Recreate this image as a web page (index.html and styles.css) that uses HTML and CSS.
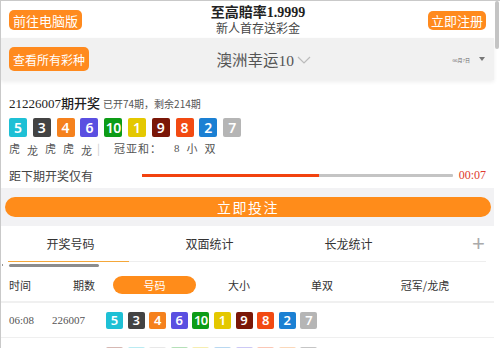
FILE: index.html
```html
<!DOCTYPE html>
<html lang="zh">
<head>
<meta charset="utf-8">
<title>澳洲幸运10</title>
<link rel="stylesheet" href="styles.css">
</head>
<body>
<div class="frame">
  <div class="page">
    <header class="topbar">
      <span class="btn btn-pc">前往电脑版</span>
      <div class="promo">
        <div class="promo-title">至高賠率1.9999</div>
        <div class="promo-sub">新人首存送彩金</div>
      </div>
      <span class="btn btn-reg">立即注册</span>
    </header>
    <div class="subbar">
      <span class="btn btn-all">查看所有彩种</span>
      <div class="game">澳洲幸运10<svg class="chev" width="14" height="8" viewBox="0 0 14 8"><path d="M1 1 L7 7 L13 1" fill="none" stroke="#bbb" stroke-width="1.2"/></svg></div>
      <div class="date">06月7日<span class="tri"></span></div>
    </div>
    <section class="draw">
      <div class="issue"><span class="issue-no">21226007期开奖</span><span class="issue-meta">已开74期，剩余214期</span></div>
      <div class="balls">
        <span class="ball c5">5</span><span class="ball c3">3</span><span class="ball c4">4</span><span class="ball c6">6</span><span class="ball c10">10</span><span class="ball c1">1</span><span class="ball c9">9</span><span class="ball c8">8</span><span class="ball c2">2</span><span class="ball c7">7</span>
      </div>
      <div class="lh">
        <span class="lh-item">虎</span><span class="lh-item low">龙</span><span class="lh-item">虎</span><span class="lh-item">虎</span><span class="lh-item low">龙</span><span class="sep">|</span><span class="sum">冠亚和：</span><span class="num">8</span><span class="lh-item">小</span><span class="lh-item">双</span>
      </div>
      <div class="countdown">
        <span class="cd-label">距下期开奖仅有</span>
        <div class="bar"><div class="bar-fill" style="width:57%"></div></div>
        <span class="cd-time">00:07</span>
      </div>
    </section>
    <div class="bet-wrap"><div class="bet">立即投注</div></div>
    <nav class="tabs">
      <span class="tab">开奖号码</span>
      <span class="tab">双面统计</span>
      <span class="tab">长龙统计</span>
      <span class="plus">+</span>
    </nav>
    <div class="tab-line"><div class="tab-active"></div></div>
    <div class="hscroll"><span class="harrow"></span><div class="hthumb"></div></div>
    <div class="thead">
      <span class="th th-time">时间</span>
      <span class="th th-no">期数</span>
      <span class="th th-pill">号码</span>
      <span class="th th-a">大小</span>
      <span class="th th-b">单双</span>
      <span class="th th-c">冠军/龙虎</span>
    </div>
    <div class="row">
      <span class="td-time">06:08</span>
      <span class="td-no">226007</span>
      <div class="sballs">
        <span class="sball c5">5</span><span class="sball c3">3</span><span class="sball c4">4</span><span class="sball c6">6</span><span class="sball c10">10</span><span class="sball c1">1</span><span class="sball c9">9</span><span class="sball c8">8</span><span class="sball c2">2</span><span class="sball c7">7</span>
      </div>
    </div>
    <div class="row faded">
      <span class="td-time"></span>
      <span class="td-no"></span>
      <div class="sballs">
        <span class="sball c9"></span><span class="sball c5"></span><span class="sball c7"></span><span class="sball c10"></span><span class="sball c1"></span><span class="sball c2"></span><span class="sball c6"></span><span class="sball c8"></span><span class="sball c4"></span><span class="sball c3"></span>
      </div>
    </div>
  </div>
  <div class="vscroll"><div class="vthumb"></div></div>
</div>
</body>
</html>
```

FILE: styles.css
```css
* { box-sizing: border-box; }
html, body { margin: 0; padding: 0; }
body {
  width: 500px;
  height: 348px;
  overflow: hidden;
  background: #fff;
  font-family: "Liberation Serif", "Noto Sans CJK SC", serif;
  color: #333;
}
.frame {
  display: flex;
  height: 348px;
  border-top: 1px solid #c9c9c9;
  border-left: 1px solid #c9c9c9;
  overflow: hidden;
}
.page { flex: 1; min-width: 0; }
.vscroll { width: 6px; position: relative; }
.vthumb {
  margin-left: 1px;
  width: 4px;
  height: 48px;
  background: #c4c4c4;
  border-radius: 2px;
}

.btn {
  display: inline-flex;
  align-items: center;
  justify-content: center;
  background: #ff8a1e;
  color: #fff;
  font-family: "Noto Sans CJK SC", sans-serif;
  border-radius: 5px;
}
.topbar {
  height: 37px;
  display: flex;
  align-items: center;
  justify-content: space-between;
  padding: 0 8px 0 8px;
}
.btn-pc { font-size: 13px; height: 20px; padding: 0 4px; margin-top: 1px; }
.btn-reg { font-size: 13px; height: 19px; padding: 0 3px; margin-top: 2px; }
.promo { text-align: center; padding-left: 6px; }
.promo-title { font-size: 14px; font-weight: bold; line-height: 15px; color: #222; }
.promo-sub { font-size: 12px; line-height: 15px; color: #444; font-family: "Noto Sans CJK SC", sans-serif; }

.subbar {
  height: 42px;
  background: #f1f1f1;
  display: flex;
  align-items: center;
  padding: 0 8px;
  box-shadow: 0 2px 4px rgba(0,0,0,0.07);
  position: relative;
}
.btn-all { font-size: 12px; height: 24px; padding: 0 4px; width: 80px; }
.game {
  flex: 1;
  text-align: center;
  font-size: 15.5px;
  color: #555;
  padding-right: 14px;
  display: flex;
  align-items: center;
  justify-content: center;
  gap: 3px;
}
.chev { margin-top: 2px; }
.date {
  font-size: 5px;
  color: #666;
  display: flex;
  align-items: center;
  gap: 9px;
  padding-right: 1px;
}
.tri {
  width: 0; height: 0;
  border-left: 3.5px solid transparent;
  border-right: 3.5px solid transparent;
  border-top: 4px solid #777;
}

.draw { padding: 15px 8px 5px 8px; }
.issue { display: flex; align-items: baseline; line-height: 18px; }
.issue-no { font-size: 13px; color: #222; font-weight: 500; }
.issue-meta { font-size: 10px; color: #555; margin-left: 3px; font-family: "Noto Sans CJK SC", sans-serif; }
.balls { display: flex; gap: 5.8px; margin-top: 5px; }
.ball, .sball {
  display: inline-flex;
  align-items: center;
  justify-content: center;
  color: #fff;
  font-family: "Noto Sans", "Liberation Sans", sans-serif;
  font-weight: 600;
  border-radius: 2px;
}
.ball { width: 18px; height: 19px; font-size: 14px; }
.c5 { background: #1ec0d5; }
.c3 { background: #434343; }
.c4 { background: #f5811d; }
.c6 { background: #5a4fe1; }
.c10 { background: #0d9c17; letter-spacing: -0.5px; }
.c1 { background: #e4c800; }
.c9 { background: #7a1607; }
.c8 { background: #f24a12; }
.c2 { background: #1b80d3; }
.c7 { background: #b5b5b5; }

.lh {
  display: flex;
  align-items: center;
  margin-top: 4px;
  height: 14px;
  font-size: 11px;
  color: #555;
  font-family: "Noto Sans CJK SC", sans-serif;
}
.lh-item { width: 11px; margin-right: 7px; }
.lh-item.low { position: relative; top: 2px; }
.sep { color: #ccc; margin-right: 14px; margin-left: -2px; }
.sum { margin-right: 12px; letter-spacing: 1px; }
.num { font-family: "Liberation Serif", serif; margin-right: 7px; }

.countdown {
  display: flex;
  align-items: center;
  margin-top: 12px;
  height: 16px;
}
.cd-label { font-size: 12px; color: #444; font-family: "Noto Sans CJK SC", sans-serif; width: 134px; }
.bar { width: 312px; height: 3px; background: #c4c4c4; border-radius: 1px; }
.bar-fill { height: 3px; background: #f2420f; }
.cd-time { font-size: 12px; color: #e03a2e; margin-left: 6px; }

.bet-wrap { background: #f2f2f4; padding: 9px 3px 9px 4px; }
.bet {
  height: 20px;
  border-radius: 10px;
  background: #ff8c1a;
  color: #fff;
  font-family: "Noto Sans CJK SC", sans-serif;
  font-size: 14px;
  letter-spacing: 1.5px;
  display: flex;
  align-items: center;
  justify-content: center;
}

.tabs {
  height: 35px;
  display: flex;
  align-items: center;
  font-family: "Noto Sans CJK SC", sans-serif;
  font-size: 12px;
  color: #333;
}
.tab { width: 139px; text-align: center; }
.plus {
  margin-left: 54px;
  font-family: "Liberation Sans", sans-serif;
  font-size: 22px;
  font-weight: 300;
  color: #aaa;
  line-height: 1;
}
.tab-line { height: 1px; background: #eee; margin: 0 8px 0 7px; }
.tab-active { width: 121px; height: 1px; background: #f4a73a; }
.hscroll { height: 6px; display: flex; align-items: center; padding-left: 1px; }
.harrow { width: 1px; height: 2px; background: #999; margin-right: 6px; }
.hthumb { width: 90px; height: 3px; background: #8c8c8c; border-radius: 2px; }

.thead {
  height: 35px;
  display: flex;
  align-items: center;
  border-bottom: 2px solid #f0f0f0;
  font-family: "Noto Sans CJK SC", sans-serif;
  font-size: 11px;
  color: #333;
}
.th-time { width: 72px; padding-left: 8px; }
.th-no { width: 40px; }
.th-pill {
  width: 83px;
  height: 18px;
  border-radius: 9px;
  background: #ff8c1a;
  color: #fff;
  display: flex;
  align-items: center;
  justify-content: center;
}
.th-a { width: 86px; text-align: center; }
.th-b { width: 80px; text-align: center; }
.th-c { width: 126px; text-align: center; }

.row {
  height: 35px;
  display: flex;
  align-items: center;
  border-bottom: 1px solid #efefef;
  font-size: 11px;
  color: #555;
}
.td-time { width: 51px; padding-left: 8px; }
.td-no { width: 54px; }
.sballs { display: flex; gap: 4.6px; }
.sball { width: 17px; height: 17px; font-size: 13px; }
.faded { opacity: 0.3; }
```
